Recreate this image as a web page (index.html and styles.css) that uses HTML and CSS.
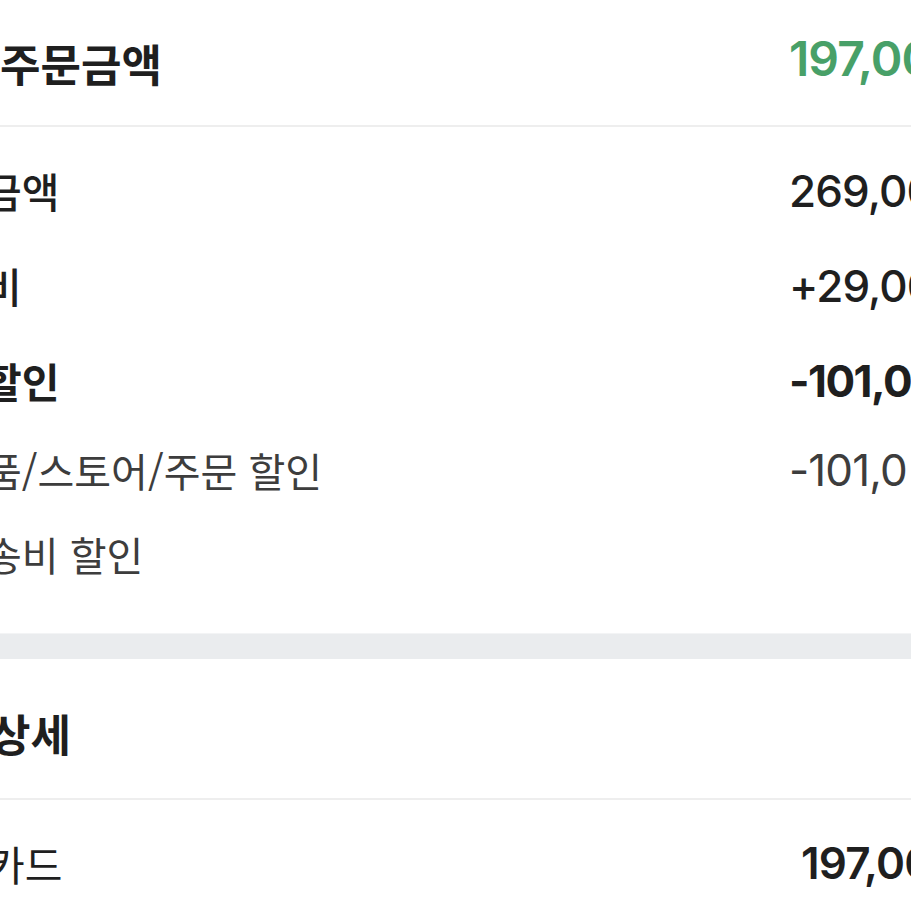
FILE: index.html
```html
<!DOCTYPE html>
<html lang="ko">
<head>
<meta charset="utf-8">
<title>주문금액</title>
<link rel="stylesheet" href="styles.css">
</head>
<body>
<div class="screen">
  <section class="summary">
    <div class="head">
      <span class="label title">주문금액</span>
      <span class="value total">197,00</span>
    </div>
    <div class="rows">
      <div class="row main">
        <span class="label medium">금액</span>
        <span class="value medium">269,00</span>
      </div>
      <div class="row main">
        <span class="label medium">비</span>
        <span class="value medium">+29,00</span>
      </div>
      <div class="row main">
        <span class="label bold">할인</span>
        <span class="value bold shift-neg">-101,00</span>
      </div>
      <div class="row sub">
        <span class="label">품/스토어/주문 할인</span>
        <span class="value">-101,0</span>
      </div>
      <div class="row sub">
        <span class="label">송비 할인</span>
        <span class="value"></span>
      </div>
    </div>
  </section>
  <div class="band"></div>
  <section class="detail">
    <div class="head detail-head">
      <span class="label title">상세</span>
    </div>
    <div class="row pay">
      <span class="label plain">카드</span>
      <span class="value semibold shift-card">197,00</span>
    </div>
  </section>
</div>
</body>
</html>
```
FILE: styles.css
```css
html, body {
  margin: 0;
  padding: 0;
  background: #ffffff;
}

.screen {
  width: 911px;
  height: 911px;
  overflow: hidden;
  font-family: "Noto Sans CJK KR", "Noto Sans", sans-serif;
  color: #1f1f1f;
}

.head {
  height: 125px;
  display: flex;
  align-items: center;
  border-bottom: 2px solid #eeeeee;
}

.label {
  flex: 1;
  min-width: 0;
  white-space: nowrap;
  font-size: 41px;
  line-height: 1;
  text-indent: -16px;
}

.label.title {
  font-size: 44px;
  font-weight: 700;
  text-indent: 0;
}

.label.medium { font-weight: 500; }
.label.bold { font-weight: 700; }

.value {
  flex: 0 0 122px;
  min-width: 0;
  white-space: nowrap;
  font-family: "Inter", "Noto Sans CJK KR", sans-serif;
  font-size: 44px;
  line-height: 1;
  letter-spacing: -0.02em;
}

.value.total {
  color: #48a068;
  font-size: 48px;
  font-weight: 600;
  margin-left: 1px;
  margin-top: -8px;
}

.value.medium { font-weight: 500; }
.value.bold { font-weight: 700; letter-spacing: -0.035em; }
.value.semibold { font-weight: 600; }

.shift-neg { margin-left: -8px; }
.shift-card { margin-left: 12px; flex-basis: 110px; }

.rows {
  padding: 16px 0 37px;
}

.row {
  display: flex;
  align-items: center;
}

.row.main { height: 95px; }
.row.sub { height: 84px; }

.row.sub .label {
  font-size: 40px;
  font-weight: 400;
  color: #3d3d3d;
  text-indent: -15px;
}

.row.sub .value {
  font-weight: 400;
  color: #3d3d3d;
}

.band {
  height: 25px;
  background: #eaecee;
  border-top: 1px solid #f3f4f5;
}

.detail-head {
  height: auto;
  padding: 54px 0 44px;
}

.detail-head .label.title {
  text-indent: -10px;
  line-height: 41px;
}

.row.pay {
  height: 126px;
}

.label.plain {
  font-weight: 400;
  text-indent: -13px;
}
```
